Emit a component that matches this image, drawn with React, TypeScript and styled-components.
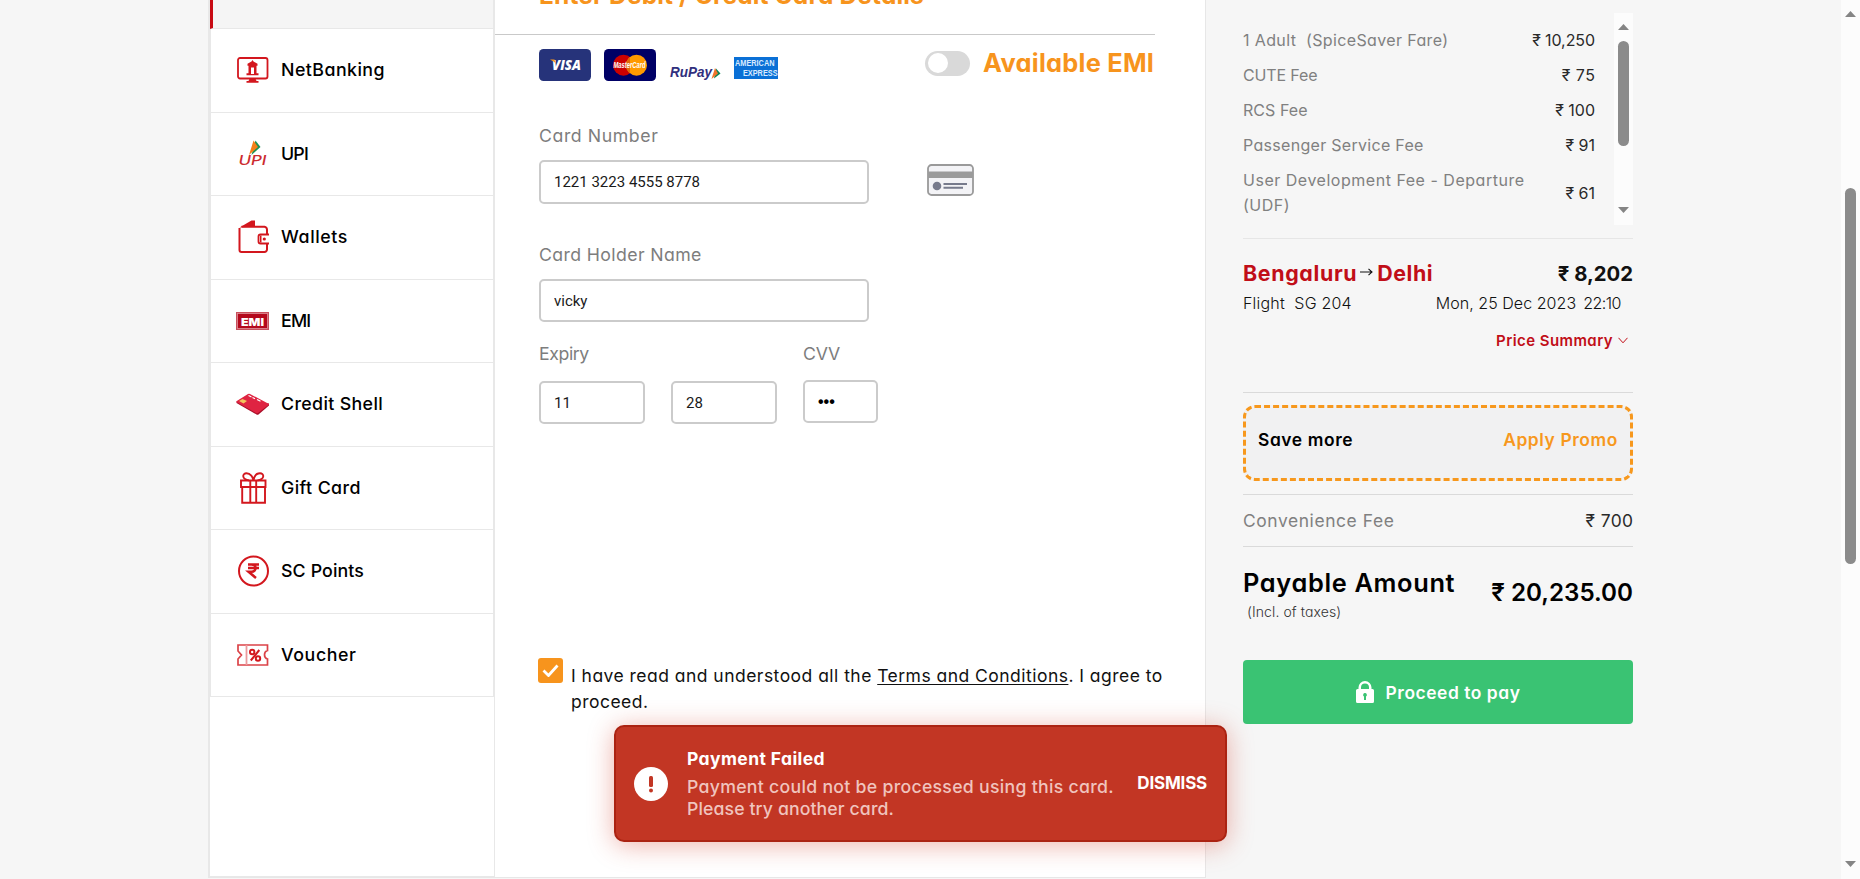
import React from 'react';
import styled, { createGlobalStyle } from 'styled-components';

const GlobalStyle = createGlobalStyle`
  * { box-sizing: border-box; }
  body {
    margin: 0;
    background: #f6f6f6;
    color: #000;
    font-family: Inter, 'Liberation Sans', sans-serif;
    font-feature-settings: 'cv11';
    overflow: hidden;
  }
  svg { display: block; flex: none; }
`;

const Page = styled.div`
  display: flex;
  height: 879px;
  overflow: hidden;
  background: #f6f6f6;
`;

const Content = styled.div`
  display: flex;
  flex: 1;
  padding-left: 208px;
`;

const Booking = styled.div`
  display: flex;
  width: 998px;
  height: 878px;
  border-bottom: 1px solid #e7e7e7;
  background: #fff;
`;

const Sidebar = styled.nav`
  width: 287px;
  height: 877px;
  border: solid #e8e8e8;
  border-width: 0 1px 1px 2px;
`;

const Methods = styled.ul`
  margin: 0;
  padding: 0;
  list-style: none;
  border: solid #e8e8e8;
  border-width: 0 1px 0 1px;
`;

const ActiveMethod = styled.li`
  height: 29px;
  margin-left: -1px;
  background: #f5f5f5;
  border-left: 3px solid #c80a14;
  border-bottom: 1px solid #e8e8e8;
`;

const Method = styled.li<{ $track: number }>`
  display: flex;
  align-items: center;
  height: 83.5px;
  padding-left: 25px;
  gap: 11px;
  border-bottom: 1px solid #e8e8e8;
  font-size: 17.8px;
  font-weight: 500;
  line-height: 20px;
  letter-spacing: ${p => p.$track}px;
`;

const Main = styled.main`
  width: 711px;
  border-right: 1px solid #e7e7e7;
`;

const Heading = styled.h2`
  width: 660px;
  height: 35px;
  margin: 0;
  padding-left: 44px;
  border-bottom: 1px solid #c9c9c9;
  color: #f7941d;
  font-size: 24.5px;
  font-weight: 700;
  line-height: 30px;
  letter-spacing: 0.14px;
  span { display: block; margin-top: -20px; }
`;

const HeadingClip = styled.div`
  height: 34px;
  display: flow-root;
`;

const BrandRow = styled.div`
  display: flex;
  align-items: flex-start;
  height: 82px;
  padding: 14px 0 0 44px;
  margin-bottom: 7px;
`;

const Brands = styled.div`
  display: flex;
  width: 386px;
  gap: 13px;
`;

const Toggle = styled.div`
  width: 45px;
  height: 25px;
  margin-top: 2px;
  padding: 2px 3px;
  border-radius: 13px;
  background: #d9d9d9;
`;

const Knob = styled.div`
  width: 20px;
  height: 20px;
  border-radius: 50%;
  background: #fff;
`;

const EmiLabel = styled.span`
  margin-left: 13px;
  color: #f7941d;
  font-size: 25.4px;
  font-weight: 700;
  line-height: 27px;
  letter-spacing: 0.25px;
  white-space: nowrap;
`;

const Form = styled.form`
  padding-left: 44px;
`;

const FieldRow = styled.div<{ $h: number }>`
  display: flex;
  height: ${p => p.$h}px;
`;

const Field = styled.div<{ $w: number; $gap: number }>`
  display: flex;
  flex-direction: column;
  width: ${p => p.$w}px;
  gap: ${p => p.$gap}px;
`;

const Label = styled.label<{ $track: number }>`
  height: 24px;
  color: #7d7d7d;
  font-size: 17.7px;
  line-height: 24px;
  letter-spacing: ${p => p.$track}px;
  white-space: nowrap;
`;

const Input = styled.input<{ $h?: number }>`
  width: 100%;
  height: ${p => p.$h ?? 43}px;
  padding: 0 13px;
  border: 2px solid #cbcbcb;
  border-radius: 5px;
  background: #fff;
  color: #1a1a1a;
  font: 400 15px Roboto, 'Liberation Sans', sans-serif;
  outline: none;
  &[type='password'] { color: #000; font: 700 16px 'Liberation Sans', sans-serif; }
`;

const MonthYear = styled.div`
  display: flex;
  gap: 26px;
  ${Input} { width: 106px; }
`;

const Consent = styled.div`
  display: flex;
  padding: 0 0 0 43px;
  gap: 8px;
`;

const Checkbox = styled.div`
  display: flex;
  align-items: center;
  justify-content: center;
  width: 25px;
  height: 25px;
  border-radius: 3px;
  background: #f7941d;
`;

const ConsentText = styled.p`
  margin: 5px 0 0;
  color: #111;
  font-size: 17.5px;
  font-weight: 400;
  line-height: 26px;
  letter-spacing: 0.47px;
  white-space: nowrap;
  u {
    text-underline-offset: 2px;
    text-decoration-thickness: 1px;
    text-decoration-skip-ink: none;
  }
`;

const Summary = styled.aside`
  width: 427px;
  padding: 13px 0 0 37px;
`;

const FareBox = styled.div`
  display: flex;
  justify-content: space-between;
  height: 212px;
  overflow: hidden;
`;

const FareList = styled.div`
  width: 352px;
  padding-top: 15px;
`;

const FareRow = styled.div`
  display: flex;
  justify-content: space-between;
  align-items: center;
  margin-bottom: 10px;
  font-size: 16px;
  line-height: 25px;
`;

const Muted = styled.span<{ $track?: number }>`
  color: #808080;
  letter-spacing: ${p => p.$track ?? 0}px;
  white-space: pre;
`;

const Amount = styled.span<{ $track?: number }>`
  color: #2a2a2a;
  letter-spacing: ${p => p.$track ?? 0}px;
  margin-right: ${p => -(p.$track ?? 0)}px;
  white-space: nowrap;
`;

const Scrollbar = styled.div<{ $pad: number }>`
  display: flex;
  flex-direction: column;
  align-items: center;
  width: 19px;
  height: 100%;
  padding: ${p => p.$pad}px 0 12px;
  background: #fcfcfc;
  flex: none;
`;

const Thumb = styled.div<{ $top: number; $h: number }>`
  width: 11px;
  height: ${p => p.$h}px;
  margin-top: ${p => p.$top}px;
  margin-bottom: auto;
  border-radius: 6px;
  background: #8b8b8b;
`;

const Rule = styled.div<{ $top: number; $light?: boolean }>`
  height: 1px;
  margin-top: ${p => p.$top}px;
  background: ${p => (p.$light ? '#e6e6e6' : '#dadada')};
`;

const RouteRow = styled.div`
  display: flex;
  align-items: center;
  height: 30px;
  margin-top: 19px;
  font-size: 21.4px;
  font-weight: 700;
`;

const City = styled.span<{ $track: number }>`
  color: #c10e18;
  letter-spacing: ${p => p.$track}px;
`;

const RoutePrice = styled.span`
  margin-left: auto;
  color: #111;
  font-size: 20.3px;
`;

const FlightRow = styled.div`
  display: flex;
  height: 24px;
  margin-top: 3px;
  padding-right: 12px;
  color: #111;
  font-size: 16px;
  font-weight: 300;
  line-height: 24px;
  white-space: pre;
  letter-spacing: 0.2px;
`;

const FlightDate = styled.span`
  margin-left: auto;
  letter-spacing: 0.05px;
`;

const FlightTime = styled.span`
  margin-left: 7px;
  letter-spacing: -0.5px;
`;

const PriceSummary = styled.div`
  display: flex;
  justify-content: flex-end;
  align-items: center;
  height: 20px;
  margin-top: 15px;
  padding-right: 5px;
  gap: 5px;
  color: #c10e18;
  font-size: 15px;
  font-weight: 600;
  letter-spacing: 0.42px;
`;

const Promo = styled.div`
  display: flex;
  justify-content: space-between;
  height: 76px;
  margin-top: 12px;
  padding: 19px 12px 0 12px;
  border: 3px dashed #f7981d;
  border-radius: 12px;
  background: #f1f1f2;
  font-size: 17.4px;
  line-height: 26px;
`;

const SaveMore = styled.span`
  font-weight: 600;
  letter-spacing: 0.6px;
`;

const ApplyPromo = styled.span`
  color: #f7981d;
  font-weight: 600;
  letter-spacing: 0.6px;
`;

const FeeRow = styled.div`
  display: flex;
  justify-content: space-between;
  height: 51px;
  font-size: 17.4px;
  line-height: 51px;
`;

const PayableRow = styled.div`
  display: flex;
  justify-content: space-between;
  height: 113px;
  padding-top: 21px;
`;

const PayableLabel = styled.div`
  font-size: 25.4px;
  font-weight: 600;
  line-height: 30px;
  letter-spacing: 0.65px;
`;

const Taxes = styled.div`
  padding-left: 4px;
  color: #333;
  font-size: 14px;
  font-weight: 300;
  line-height: 28px;
  letter-spacing: 0.1px;
`;

const PayableAmount = styled.div`
  margin-top: 9px;
  font-size: 24.2px;
  font-weight: 600;
  line-height: 32px;
`;

const PayButton = styled.button`
  display: flex;
  align-items: center;
  justify-content: center;
  width: 100%;
  height: 64px;
  gap: 12px;
  border: 0;
  border-radius: 4px;
  background: #3ac373;
  color: #fff;
  font: 600 17.4px Inter, sans-serif;
  font-feature-settings: 'cv11';
  letter-spacing: 0.55px;
`;

const Toast = styled.div`
  position: absolute;
  left: 614px;
  top: 725px;
  display: flex;
  width: 613px;
  height: 117px;
  padding: 0 18px;
  align-items: center;
  border: 2px solid #ab2312;
  border-radius: 10px;
  background: #c23624;
  box-shadow: 0 3px 26px rgba(210, 60, 40, 0.4);
  color: #fff;
`;

const ToastBody = styled.div`
  margin-left: 19px;
  font-size: 17.7px;
  line-height: 22px;
  white-space: nowrap;
`;

const ToastTitle = styled.div`
  margin-bottom: 6px;
  font-size: 17.5px;
  font-weight: 700;
  letter-spacing: 0.4px;
`;

const ToastText = styled.div<{ $track: number }>`
  color: #f0c4be;
  font-weight: 500;
  letter-spacing: ${p => p.$track}px;
`;

const Dismiss = styled.span`
  margin-left: auto;
  margin-bottom: 1px;
  font-size: 17px;
  font-weight: 700;
  letter-spacing: -0.2px;
`;

const RED = '#d3171e';

const NetBankingIcon = () => (
  <svg width="34" height="34" fill="none">
    <rect x="2" y="5" width="29.5" height="20.5" rx="2" stroke={RED} strokeWidth="1.8" />
    <path d="M13.500 25.800h6l1 2.200h2v1.800h-12v-1.800h2z" fill={RED} />
    <path d="M16.500 7l1 1.500 4 2.300v2h-1v7.500h2v2H10.500v-2h2v-7.500h-1v-2l4-2.300zM15 14.500v6.500h3v-6.500z" fill={RED} fillRule="evenodd" />
  </svg>
);

const UpiIcon = () => (
  <svg width="34" height="34">
    <path d="M19.500 3.500l5 6.500-9 8z" fill="#1e9054" />
    <path d="M17.500 3.500l4.500 6.500-9 8z" fill="#f57f17" />
    <text x="2.500" y="28.300" textLength="28" lengthAdjust="spacingAndGlyphs" fontFamily="Inter, sans-serif" fontSize="12.500" fontStyle="italic" fontWeight="500" letterSpacing="0" fill="#cc2b2f">UPI</text>
  </svg>
);

const WalletIcon = () => (
  <svg width="34" height="34" fill="none">
    <path d="M3.500 7.500L15.500.5h3.500v6z" fill={RED} />
    <path d="M5.500 6.800h23a3 3 0 0 1 2.500 2.700v4.500M31 24v5.500a2.500 2.500 0 0 1-2.500 2.500h-23a2 2 0 0 1-2-2V8" stroke={RED} strokeWidth="2" />
    <path d="M33 14.500h-8.500a2 2 0 0 0-2 2v5a2 2 0 0 0 2 2h8.500" stroke={RED} strokeWidth="1.800" />
    <path d="M24 15.500v7h1.500v-7z" fill={RED} />
    <circle cx="28.300" cy="19" r="1.600" fill={RED} />
  </svg>
);

const EmiIcon = () => (
  <svg width="34" height="34">
    <rect x="0" y="8" width="33" height="18" fill="#c8505c" />
    <rect x="1.500" y="9.500" width="30" height="15" fill="#b4081c" stroke="#e0929b" strokeWidth=".8" />
    <text x="5" y="21.500" textLength="23" lengthAdjust="spacingAndGlyphs" fontFamily="Inter, sans-serif" fontSize="11" fontWeight="900" letterSpacing="0" fill="#fff">EMI</text>
  </svg>
);

const CreditShellIcon = () => (
  <svg width="34" height="34">
    <path d="M.5 14.500v1.500L20.500 27.500q1 .4 2 0L33 18.500v-2z" fill="#a80e28" />
    <path d="M.8 14L12 7q1-.5 2 0L32.500 16.700q1 .7 0 1.300l-10.500 8q-1 .5-2 0L.8 15.300q-.8-.7 0-1.300z" fill="#df2442" />
    <path d="M3 14l3.500-2 4.500 2-3.500 2.500z" fill="#f2c45c" />
    <path d="M12.500 8.500l3 1.500M16.500 10.500l2.500 1.300M21 12.500l3.500 1.800" stroke="#fff" strokeWidth="1.200" />
  </svg>
);

const GiftIcon = () => (
  <svg width="34" height="34" fill="none" stroke={RED} strokeWidth="1.900">
    <path d="M5 9.500h24.500v6.500H5zM6.200 16v15.800h22.800V16M14.300 9.500v22.300M20.200 9.500v22.300" />
    <path d="M13 9.500C5 8 6.500 2.200 10.500 2.200c4 0 6.500 4 7 7.300.5-3.300 2.500-7.300 6.500-7.300s5.500 5.800-2.500 7.300" />
  </svg>
);

const PointsIcon = () => (
  <svg width="34" height="34" fill="none">
    <circle cx="17.500" cy="17" r="14.500" stroke={RED} strokeWidth="2" />
    <path d="M12 10.400h11M12 14h11M12 10.400h3.500c5.500 0 5.500 7.300 0 7.300H12.500l7.500 6.300" stroke={RED} strokeWidth="2.500" />
  </svg>
);

const VoucherIcon = () => (
  <svg width="34" height="34" fill="none" stroke="#db4348">
    <path d="M2 7h29.500v5.500c-4 1-4 7.500 0 8.500v6H2v-6l3.500-4-3.500-4z" strokeWidth="1.700" />
    <path d="M10.500 7v20" strokeWidth="1.800" stroke="#eb9a9d" />
    <g stroke="#d3171e">
      <circle cx="16.200" cy="14" r="2.200" strokeWidth="2" />
      <circle cx="22" cy="20.500" r="2.200" strokeWidth="2" />
      <path d="M23.300 12l-8.500 10.500" strokeWidth="2" />
    </g>
  </svg>
);

const VisaLogo = () => (
  <svg width="52" height="32">
    <rect width="52" height="32" rx="4.500" fill="#26337a" />
    <text x="13" y="21" textLength="29" lengthAdjust="spacingAndGlyphs" fontFamily="'Open Sans', sans-serif" fontSize="14.500" fontStyle="italic" fontWeight="800" fill="#fff">VISA</text>
    <path d="M11 10.500h4.500l1.500 5q-2-3.500-6-5z" fill="#f7981d" />
  </svg>
);

const MasterCardLogo = () => (
  <svg width="52" height="32">
    <rect width="52" height="32" rx="4.500" fill="#000066" />
    <circle cx="19.500" cy="16.200" r="10.500" fill="#cc0000" />
    <circle cx="32.500" cy="16.200" r="10.500" fill="#ff9900" />
    <path d="M26 8v16.500q-4-3.500-4-8.300t4-8.200z" fill="#e06a08" />
    <text x="9.500" y="19.200" textLength="32" lengthAdjust="spacingAndGlyphs" fontFamily="'Liberation Sans', sans-serif" fontSize="8.500" fontStyle="italic" fontWeight="700" fill="#fff">MasterCard</text>
  </svg>
);

const RupayLogo = () => (
  <svg width="52" height="32">
    <text x="1" y="28" textLength="42" lengthAdjust="spacingAndGlyphs" fontFamily="'Liberation Sans', sans-serif" fontSize="14.500" fontStyle="italic" fontWeight="700" fill="#302f7d">RuPay</text>
    <path d="M47 19.500l4.500 5-6.500 5z" fill="#0b8456" />
    <path d="M46 19l3 5.500-6.500 5.500z" fill="#f0742b" />
  </svg>
);

const AmexLogo = () => (
  <svg width="45" height="32">
    <rect y="8" width="44" height="22" fill="#0a70d6" />
    <g fontFamily="'Liberation Sans', sans-serif" fontSize="8.500" fontWeight="700" fill="#d9ebff">
      <text x="1" y="17.200" textLength="39.500" lengthAdjust="spacingAndGlyphs">AMERICAN</text>
      <text x="9" y="26.600" textLength="34.500" lengthAdjust="spacingAndGlyphs">EXPRESS</text>
    </g>
  </svg>
);

const CardIcon = styled.svg`
  margin: 40px 0 0 58px;
`;

const Triangle = ({ down }: { down?: boolean }) => (
  <svg width="11" height="6"><path d={down ? 'M0 0h11L5.500 6z' : 'M0 6h11L5.500 0z'} fill="#858585" /></svg>
);

const methods: [string, number, () => React.JSX.Element][] = [
  ['NetBanking', 0.45, NetBankingIcon],
  ['UPI', -0.8, UpiIcon],
  ['Wallets', 0.6, WalletIcon],
  ['EMI', -0.8, EmiIcon],
  ['Credit Shell', 0.35, CreditShellIcon],
  ['Gift Card', 0.4, GiftIcon],
  ['SC Points', 0.12, PointsIcon],
  ['Voucher', 0.6, VoucherIcon],
];

const fares: [string, number, string, number][] = [
  ['1 Adult  (SpiceSaver Fare)', 0.37, '₹ 10,250', -0.1],
  ['CUTE Fee', -0.15, '₹ 75', 0.5],
  ['RCS Fee', 0.05, '₹ 100', 0],
  ['Passenger Service Fee', 0.3, '₹ 91', 0],
  ['User Development Fee - Departure\n(UDF)', 0.52, '₹ 61', 0],
];

export default function App() {
  return (
    <>
      <GlobalStyle />
      <Page>
        <Content>
          <Booking>
            <Sidebar>
              <Methods>
                <ActiveMethod />
                {methods.map(([name, track, Icon]) => (
                  <Method key={name} $track={track}><Icon />{name}</Method>
                ))}
              </Methods>
            </Sidebar>
            <Main>
              <Heading><HeadingClip><span>Enter Debit / Credit Card Details</span></HeadingClip></Heading>
              <BrandRow>
                <Brands><VisaLogo /><MasterCardLogo /><RupayLogo /><AmexLogo /></Brands>
                <Toggle><Knob /></Toggle>
                <EmiLabel>Available EMI</EmiLabel>
              </BrandRow>
              <Form>
                <FieldRow $h={119}>
                  <Field $w={330} $gap={12}>
                    <Label $track={0.58}>Card Number</Label>
                    <Input $h={44} defaultValue="1221 3223 4555 8778" />
                  </Field>
                  <CardIcon width="47" height="32" fill="none">
                    <rect x="1" y="1" width="45" height="30" rx="3.500" fill="#f3f3f6" stroke="#9a9a9a" strokeWidth="1.800" />
                    <path d="M1 7.500h45v6.500H1z" fill="#9b9b9b" />
                    <circle cx="10" cy="22" r="4.300" fill="#777b8c" />
                    <path d="M16.500 20h23.500M16.500 23.800h19.500" stroke="#777b8c" strokeWidth="2" />
                  </CardIcon>
                </FieldRow>
                <FieldRow $h={99}>
                  <Field $w={330} $gap={12}>
                    <Label $track={0.38}>Card Holder Name</Label>
                    <Input defaultValue="vicky" />
                  </Field>
                </FieldRow>
                <FieldRow $h={316}>
                  <Field $w={264} $gap={15}>
                    <Label $track={-0.4}>Expiry</Label>
                    <MonthYear><Input defaultValue="11" /><Input defaultValue="28" /></MonthYear>
                  </Field>
                  <Field $w={75} $gap={14}>
                    <Label $track={-0.2}>CVV</Label>
                    <Input type="password" defaultValue="123" />
                  </Field>
                </FieldRow>
              </Form>
              <Consent>
                <Checkbox>
                  <svg width="17" height="13" fill="none"><path d="M1.500 6.500l5 5L15.500 1.500" stroke="#fff" strokeWidth="2.800" /></svg>
                </Checkbox>
                <ConsentText>
                  I have read and understood all the <u>Terms and Conditions</u>. I agree to<br />proceed.
                </ConsentText>
              </Consent>
            </Main>
          </Booking>
          <Summary>
            <FareBox>
              <FareList>
                {fares.map(([name, track, amount, aTrack]) => (
                  <FareRow key={name}><Muted $track={track}>{name}</Muted><Amount $track={aTrack}>{amount}</Amount></FareRow>
                ))}
              </FareList>
              <Scrollbar $pad={11}>
                <Triangle />
                <Thumb $top={11} $h={105} />
                <Triangle down />
              </Scrollbar>
            </FareBox>
            <Rule $top={13} $light />
            <RouteRow>
              <City $track={0.66}>Bengaluru</City>
              <svg width="20" height="10" fill="none"><path d="M3 4h12M11.500 .8L15 4l-3.500 3.200" stroke="#111" strokeWidth="1.100" /></svg>
              <City $track={0.55}>Delhi</City>
              <RoutePrice>₹ 8,202</RoutePrice>
            </RouteRow>
            <FlightRow>
              Flight  SG 204<FlightDate>Mon, 25 Dec 2023</FlightDate><FlightTime>22:10</FlightTime>
            </FlightRow>
            <PriceSummary>
              Price Summary
              <svg width="10" height="7" fill="none"><path d="M.5 .8L5 5.800 9.500 .8" stroke="#c10e18" /></svg>
            </PriceSummary>
            <Rule $top={42} />
            <Promo><SaveMore>Save more</SaveMore><ApplyPromo>Apply Promo</ApplyPromo></Promo>
            <Rule $top={13} />
            <FeeRow><Muted $track={0.6}>Convenience Fee</Muted><Amount $track={0.4}>₹ 700</Amount></FeeRow>
            <Rule $top={0} />
            <PayableRow>
              <div>
                <PayableLabel>Payable Amount</PayableLabel>
                <Taxes>(Incl. of taxes)</Taxes>
              </div>
              <PayableAmount>₹ 20,235.00</PayableAmount>
            </PayableRow>
            <PayButton>
              <svg width="18" height="22">
                <path d="M9 0a6.500 6.500 0 0 0-6.500 6.500V8H1.500Q0 8 0 9.500v11Q0 22 1.500 22h15q1.500 0 1.500-1.500v-11Q18 8 16.500 8h-1V6.500A6.500 6.500 0 0 0 9 0zm0 2.600a4 4 0 0 1 4 4V8H5V6.600a4 4 0 0 1 4-4z" fill="#fff" fillRule="evenodd" />
                <path d="M9 12a1.900 1.900 0 0 1 1 3.500V19H8v-3.500A1.900 1.900 0 0 1 9 12z" fill="#3ac373" />
              </svg>
              Proceed to pay
            </PayButton>
          </Summary>
        </Content>
        <Scrollbar $pad={11}>
          <Triangle />
          <Thumb $top={171} $h={376} />
          <Triangle down />
        </Scrollbar>
        <Toast>
          <svg width="34" height="34">
            <circle cx="17" cy="17" r="17" fill="#fff" />
            <rect x="15" y="9" width="4" height="11" rx="1.500" fill="#c23624" />
            <circle cx="17" cy="23.500" r="2" fill="#c23624" />
          </svg>
          <ToastBody>
            <ToastTitle>Payment Failed</ToastTitle>
            <ToastText $track={0.28}>Payment could not be processed using this card.</ToastText>
            <ToastText $track={0.1}>Please try another card.</ToastText>
          </ToastBody>
          <Dismiss>DISMISS</Dismiss>
        </Toast>
      </Page>
    </>
  );
}
